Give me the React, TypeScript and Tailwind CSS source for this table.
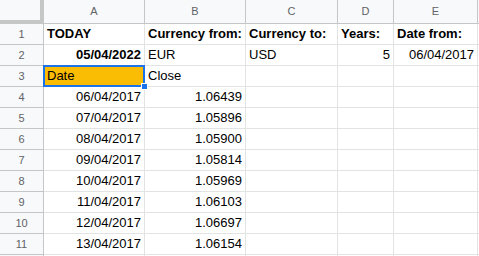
import React from "react";

type Cell = { t?: string; b?: boolean; r?: boolean };

const cols = ["A", "B", "C", "D", "E", ""];
const widths = ["w-[101px]", "w-[101px]", "w-[92px]", "w-[56px]", "w-[84px]", "w-[100px]"];

const rows: Cell[][] = [
  [{ t: "TODAY", b: true }, { t: "Currency from:", b: true }, { t: "Currency to:", b: true }, { t: "Years:", b: true }, { t: "Date from:", b: true }, {}],
  [{ t: "05/04/2022", b: true, r: true }, { t: "EUR" }, { t: "USD" }, { t: "5", r: true }, { t: "06/04/2017", r: true }, {}],
  [{ t: "Date" }, { t: "Close" }, {}, {}, {}, {}],
  [{ t: "06/04/2017", r: true }, { t: "1.06439", r: true }, {}, {}, {}, {}],
  [{ t: "07/04/2017", r: true }, { t: "1.05896", r: true }, {}, {}, {}, {}],
  [{ t: "08/04/2017", r: true }, { t: "1.05900", r: true }, {}, {}, {}, {}],
  [{ t: "09/04/2017", r: true }, { t: "1.05814", r: true }, {}, {}, {}, {}],
  [{ t: "10/04/2017", r: true }, { t: "1.05969", r: true }, {}, {}, {}, {}],
  [{ t: "11/04/2017", r: true }, { t: "1.06103", r: true }, {}, {}, {}, {}],
  [{ t: "12/04/2017", r: true }, { t: "1.06697", r: true }, {}, {}, {}, {}],
  [{ t: "13/04/2017", r: true }, { t: "1.06154", r: true }, {}, {}, {}, {}],
  [{}, {}, {}, {}, {}, {}],
];

export default function App() {
  return (
    <div className="w-[479px] h-[256px] overflow-hidden bg-white" style={{ fontFamily: '"Liberation Sans", Arial, sans-serif' }}>
      <div className="flex flex-col w-max">
        <div className="flex h-[24px]">
          <div className="w-[44px] h-[24px] shrink-0 bg-[#f8f9fa] border-r-[4px] border-b-[4px] border-[#c4c7c5]" />
          {cols.map((c, i) => (
            <div
              key={i}
              className={`${widths[i]} shrink-0 h-[24px] bg-[#f8f9fa] border-r border-b border-[#c4c7c5] flex items-center justify-center text-[11px] text-[#5f6368]`}
            >
              {c}
            </div>
          ))}
        </div>
        {rows.map((row, ri) => (
          <div key={ri} className="flex h-[21px]">
            <div className="w-[44px] shrink-0 h-[21px] bg-[#f8f9fa] border-r border-b border-[#c4c7c5] flex items-center justify-center text-[11px] text-[#5f6368]">
              {ri < 11 ? ri + 1 : ""}
            </div>
            {row.map((cell, ci) => {
              const selected = ri === 2 && ci === 0;
              return (
                <div
                  key={ci}
                  className={`${widths[ci]} shrink-0 h-[21px] border-r border-b border-[#e2e3e3] relative flex items-end px-[3px] pb-[2px] text-[13px] leading-[16px] text-black whitespace-nowrap ${
                    cell.r ? "justify-end" : "justify-start"
                  } ${cell.b ? "font-bold" : ""} ${selected ? "bg-[#fbbc04]" : ""}`}
                >
                  {cell.t}
                  {selected && (
                    <>
                      <div className="absolute left-[-1px] top-[-1px] right-[-1px] bottom-[-1px] border-2 border-[#1a73e8]" />
                      <div className="absolute right-[-4px] bottom-[-4px] w-[7px] h-[7px] bg-[#1a73e8] border border-white z-10" />
                    </>
                  )}
                </div>
              );
            })}
          </div>
        ))}
      </div>
    </div>
  );
}
